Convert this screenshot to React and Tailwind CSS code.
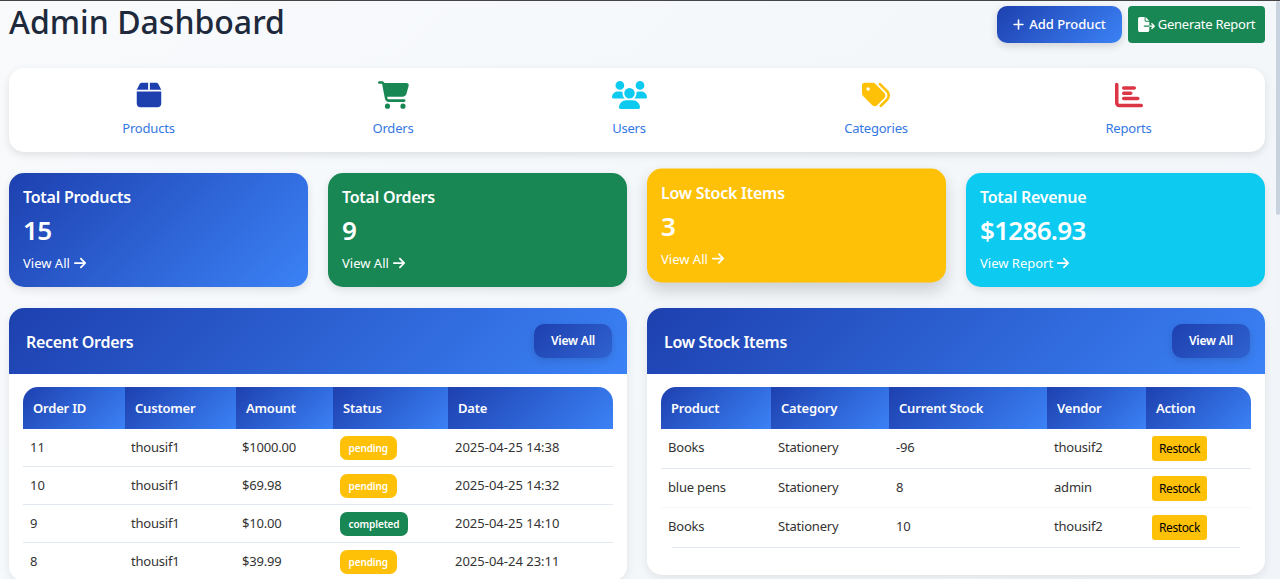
import React from "react";
import { FaBox, FaCartShopping, FaUsers, FaTags, FaChartBar, FaPlus, FaFileExport, FaArrowRight } from "react-icons/fa6";

const grad = "bg-[linear-gradient(135deg,#1e40af,#3b82f6)]";

function NavItem({ icon, label, color, className }) {
  return (
    <div className={"flex flex-col items-center " + className}>
      <span className={"flex h-[28px] items-center justify-center text-[28px] " + color}>{icon}</span>
      <span className="mt-[9px] text-[13px] leading-[20px] tracking-[-0.2px] text-[#3478e4]">{label}</span>
    </div>
  );
}

function Stat({ title, value, link, bg, raised }) {
  return (
    <div className={"flex-1 h-[114px] rounded-[15px] px-[14px] pt-[13px] text-white " + bg + (raised ? " -translate-y-[4.5px] shadow-[0_8px_16px_rgba(0,0,0,0.16)]" : " shadow-[0_3px_8px_rgba(0,0,0,0.1)]")}>
      <div className="text-[16px] leading-[22px] font-semibold tracking-[-0.25px]">{title}</div>
      <div className="mt-[4px] text-[26px] leading-[36px] font-semibold tracking-[-0.7px]">{value}</div>
      <div className="mt-[5px] flex items-center gap-[3px] text-[13px] leading-[20px]">{link}<FaArrowRight className="text-[14px]" /></div>
    </div>
  );
}

function Panel({ title, children, className }) {
  return (
    <div className={"flex-1 overflow-hidden rounded-[15px] bg-white shadow-[0_3px_10px_rgba(0,0,0,0.08)] " + className}>
      <div className={"flex h-[66px] items-center justify-between pl-[17px] pr-[15px] " + grad}>
        <span className="pt-[2px] text-[16px] font-semibold tracking-[-0.3px] text-white">{title}</span>
        <span className="flex h-[34px] w-[78px] items-center justify-center rounded-[10px] bg-[linear-gradient(135deg,#1e40af,#2f62d0)] text-[12px] font-semibold tracking-[-0.2px] text-white shadow-[0_3px_8px_rgba(0,0,0,0.12)]">View All</span>
      </div>
      {children}
    </div>
  );
}

function Head({ cols }) {
  return (
    <div className="flex h-[42px] overflow-hidden rounded-t-[15px]">
      {cols.map(([t, w]) => (
        <div key={t} style={{ width: w }} className={"flex items-center pl-[10px] pt-[2px] text-[13px] font-semibold tracking-[-0.2px] text-white " + grad}>{t}</div>
      ))}
    </div>
  );
}

const orders = [
  ["11", "thousif1", "$1000.00", "pending", "2025-04-25 14:38"],
  ["10", "thousif1", "$69.98", "pending", "2025-04-25 14:32"],
  ["9", "thousif1", "$10.00", "completed", "2025-04-25 14:10"],
  ["8", "thousif1", "$39.99", "pending", "2025-04-24 23:11"],
];
const orderW = [102, 111, 97, 115, 165];
const orderPad = ["pl-[7px]", "pl-[6px] tracking-[-0.2px]", "pl-[6px] tracking-[-0.2px]", "pl-[7px]", "pl-[7px]"];

const stock = [
  ["Books", "Stationery", "-96", "thousif2", "h-[40px] border-b border-[#e2e8f0]"],
  ["blue pens", "Stationery", "8", "admin", "h-[39px] border-b border-[#f4f6fa]"],
  ["Books", "Stationery", "10", "thousif2", "h-[39px]"],
];
const stockW = [110, 118, 158, 99, 105];

export default function App() {
  return (
    <div className="relative h-[579px] overflow-hidden border-t border-[#444] bg-[linear-gradient(135deg,#f8fafc,#f1f5f9)] pl-[9px] pr-[15px] font-['Noto_Sans',sans-serif] text-[#212529]">
      <div className="flex h-[67px] items-start justify-between">
        <h1 className="text-[32px] leading-[42px] font-medium text-[#1e293b]">Admin Dashboard</h1>
        <div className="mt-[5px] flex gap-[6.5px]">
          <span className={"flex h-[37px] w-[125px] items-center justify-center gap-[4px] rounded-[10px] text-[13px] font-medium text-white shadow-[0_3px_8px_rgba(0,0,0,0.15)] " + grad}><FaPlus className="text-[13px]" />Add Product</span>
          <span className="flex h-[37px] w-[137px] items-center justify-center gap-[3px] rounded-[4px] bg-[#198754] text-[13px] tracking-[-0.25px] text-white"><FaFileExport className="h-[15px] w-[17px]" />Generate Report</span>
        </div>
      </div>

      <div className="flex h-[84px] items-start rounded-[15px] bg-white pt-[13px] shadow-[0_3px_8px_rgba(0,0,0,0.1)]">
        <NavItem className="w-[279px]" icon={<FaBox />} label="Products" color="text-[#1e40af]" />
        <NavItem className="w-[210px]" icon={<FaCartShopping className="h-[28px] w-[31px]" />} label="Orders" color="text-[#198754]" />
        <NavItem className="w-[262px]" icon={<FaUsers className="h-[28px] w-[35px]" />} label="Users" color="text-[#0dcaf0]" />
        <NavItem className="w-[232px]" icon={<FaTags />} label="Categories" color="text-[#ffc107]" />
        <NavItem className="w-[273px]" icon={<FaChartBar />} label="Reports" color="text-[#dc3545]" />
      </div>

      <div className="mt-[21px] flex gap-[20px]">
        <Stat title="Total Products" value="15" link="View All" bg={grad} />
        <Stat title="Total Orders" value="9" link="View All" bg="bg-[#198754]" />
        <Stat title="Low Stock Items" value="3" link="View All" bg="bg-[#ffc107]" raised />
        <Stat title="Total Revenue" value="$1286.93" link="View Report" bg="bg-[#0dcaf0]" />
      </div>

      <div className="mt-[21px] flex items-start gap-[20px]">
        <Panel title="Recent Orders">
          <div className="px-[14px] pt-[13px]">
            <Head cols={[["Order ID", 102], ["Customer", 111], ["Amount", 97], ["Status", 115], ["Date", 165]]} />
            {orders.map((r) => (
              <div key={r[0]} className="flex h-[38px] items-center border-b border-[#e2e8f0] text-[13px] text-[#333]">
                {r.map((c, i) => (
                  <div key={i} style={{ width: orderW[i] }} className={orderPad[i]}>
                    {i === 3 ? (
                      <span className={"inline-flex h-[24px] items-center rounded-[7px] px-[8.5px] pt-[2px] text-[10px] font-semibold tracking-[-0.1px] text-white " + (c === "pending" ? "bg-[#ffc107]" : "bg-[#198754]")}>{c}</span>
                    ) : c}
                  </div>
                ))}
              </div>
            ))}
          </div>
        </Panel>
        <Panel title="Low Stock Items" className="h-[267px]">
          <div className="px-[14px] pt-[13px]">
            <Head cols={[["Product", 110], ["Category", 118], ["Current Stock", 158], ["Vendor", 99], ["Action", 105]]} />
            {stock.map((r, k) => (
              <div key={k} className={"flex items-start text-[13px] text-[#333] " + r[4]}>
                {r.slice(0, 4).map((c, i) => (
                  <div key={i} style={{ width: stockW[i] }} className="pl-[7px] pt-[8px] leading-[20px] tracking-[-0.2px]">{c}</div>
                ))}
                <div style={{ width: stockW[4] }} className="pl-[6px] pt-[7px]">
                  <span className="inline-flex h-[25px] items-center rounded-[3px] bg-[#ffc107] px-[7px] pt-[1px] text-[12px] tracking-[-0.4px] text-black">Restock</span>
                </div>
              </div>
            ))}
            <div className="mx-[11px] border-b border-[#e2e8f0]" />
          </div>
        </Panel>
      </div>

      <div className="absolute right-0 top-0 h-full w-[4px] bg-[#f1f5f9]">
        <div className="h-[214px] w-full rounded-[2px] bg-[#c9d3e0]" />
      </div>
    </div>
  );
}
